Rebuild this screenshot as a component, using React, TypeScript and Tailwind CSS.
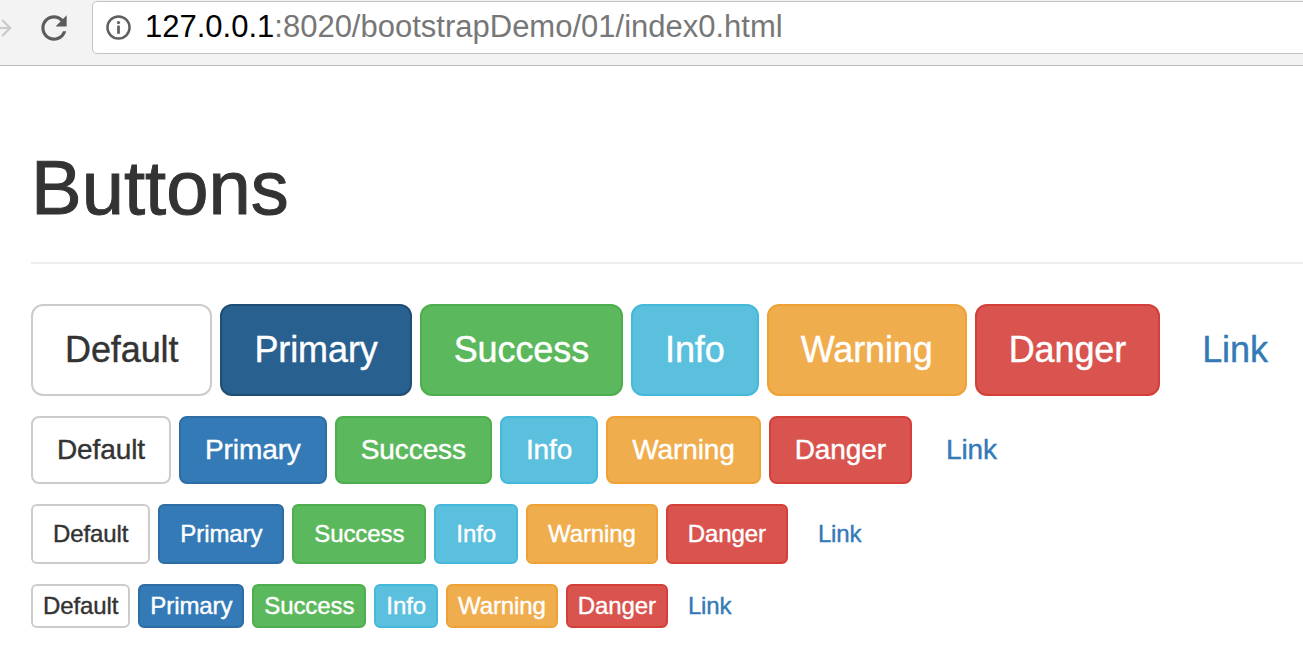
import React from 'react'

type Variant = 'default' | 'primary' | 'success' | 'info' | 'warning' | 'danger' | 'link'
type Size = 'lg' | 'md' | 'sm' | 'xs'

const variants: Record<Variant, string> = {
    default: 'bg-white border-[#ccc] text-[#333]',
    primary: 'bg-[#337ab7] border-[#2e6da4] text-white',
    success: 'bg-[#5cb85c] border-[#4cae4c] text-white',
    info: 'bg-[#5bc0de] border-[#46b8da] text-white',
    warning: 'bg-[#f0ad4e] border-[#eea236] text-white',
    danger: 'bg-[#d9534f] border-[#d43f3a] text-white',
    link: 'bg-transparent border-transparent text-[#337ab7]',
}

const sizes: Record<Size, string> = {
    lg: 'text-[36px] leading-[48px] py-[20px] px-[32px] rounded-[12px]',
    md: 'text-[28px] leading-[40px] py-[12px] px-[24px] rounded-[8px]',
    sm: 'text-[24px] leading-[36px] py-[10px] px-[20px] rounded-[6px]',
    xs: 'text-[24px] leading-[36px] py-[2px] px-[10px] rounded-[6px]',
}

const labels: { v: Variant; t: string }[] = [
    { v: 'default', t: 'Default' },
    { v: 'primary', t: 'Primary' },
    { v: 'success', t: 'Success' },
    { v: 'info', t: 'Info' },
    { v: 'warning', t: 'Warning' },
    { v: 'danger', t: 'Danger' },
    { v: 'link', t: 'Link' },
]

function Btn({ v, size, focused, children }: { v: Variant; size: Size; focused?: boolean; children: React.ReactNode }) {
    const look = focused ? 'bg-[#286090] border-[#204d74] text-white' : variants[v]
    return (
        <button type="button" className={`shrink-0 border-2 whitespace-nowrap tracking-[-0.1px] [-webkit-text-stroke-width:0.4px] ${sizes[size]} ${look}`}>
            {children}
        </button>
    )
}

function Row({ size }: { size: Size }) {
    return (
        <div className='flex gap-2'>
            {labels.map((b) => (
                <Btn key={b.t} v={b.v} size={size} focused={size === 'lg' && b.v === 'primary'}>{b.t}</Btn>
            ))}
        </div>
    )
}

function Toolbar() {
    return (
        <div className='h-[66px] bg-[#f3f3f3] border-b border-[#bababa] overflow-hidden'>
            <div className='flex h-[55px] items-center'>
                {/* forward arrow, cut at the edge */}
                <svg width="26" height="26" viewBox="0 0 24 24" className='ml-[-10px] shrink-0' fill="#cacaca">
                    <path d="M12 4l-1.41 1.41L16.17 11H4v2h12.17l-5.58 5.59L12 20l8-8z" />
                </svg>
                {/* reload */}
                <svg width="38" height="38" viewBox="0 0 24 24" className='ml-[19px] shrink-0' fill="#5c5c5c">
                    <path d="M17.65 6.35C16.2 4.9 14.21 4 12 4c-4.42 0-7.99 3.58-7.99 8s3.57 8 7.99 8c3.73 0 6.84-2.55 7.73-6h-2.08c-.82 2.33-3.04 4-5.65 4-3.31 0-6-2.69-6-6s2.69-6 6-6c1.66 0 3.14.69 4.22 1.78L13 11h7V4l-2.35 2.35z" />
                </svg>
                <div className='ml-[19px] mr-[-20px] flex-1 h-[53px] bg-white border border-[#c2c2c2] rounded-[5px] flex items-center pl-[13px]'>
                    <svg width="25" height="25" viewBox="0 0 24 24" className='shrink-0'>
                        <circle cx="12" cy="12" r="10.6" fill="none" stroke="#5f5f5f" strokeWidth="2.4" />
                        <circle cx="12" cy="7.3" r="1.5" fill="#5f5f5f" />
                        <rect x="10.7" y="10.2" width="2.6" height="7.8" fill="#5f5f5f" />
                    </svg>
                    <span className='ml-[14px] text-[31px] whitespace-nowrap text-black'>
                        127.0.0.1<span className='text-[#777]'>:8020/bootstrapDemo/01/index0.html</span>
                    </span>
                </div>
            </div>
        </div>
    )
}

export default function App() {
    return (
        <div className='w-full h-[654px] overflow-hidden bg-white' style={{ fontFamily: '"Liberation Sans", Arial, sans-serif' }}>
            <Toolbar />
            <div className='pl-[31px] pt-[84px]'>
                <h1 className='text-[76px] leading-none text-[#333] font-normal [-webkit-text-stroke-width:1px]'>Buttons</h1>
                <hr className='mt-[36px] border-0 h-[2px] bg-[#eee]' />
                <div className='mt-[40px] flex flex-col gap-[20px]'>
                    <Row size="lg" />
                    <Row size="md" />
                    <Row size="sm" />
                    <Row size="xs" />
                </div>
            </div>
        </div>
    )
}
